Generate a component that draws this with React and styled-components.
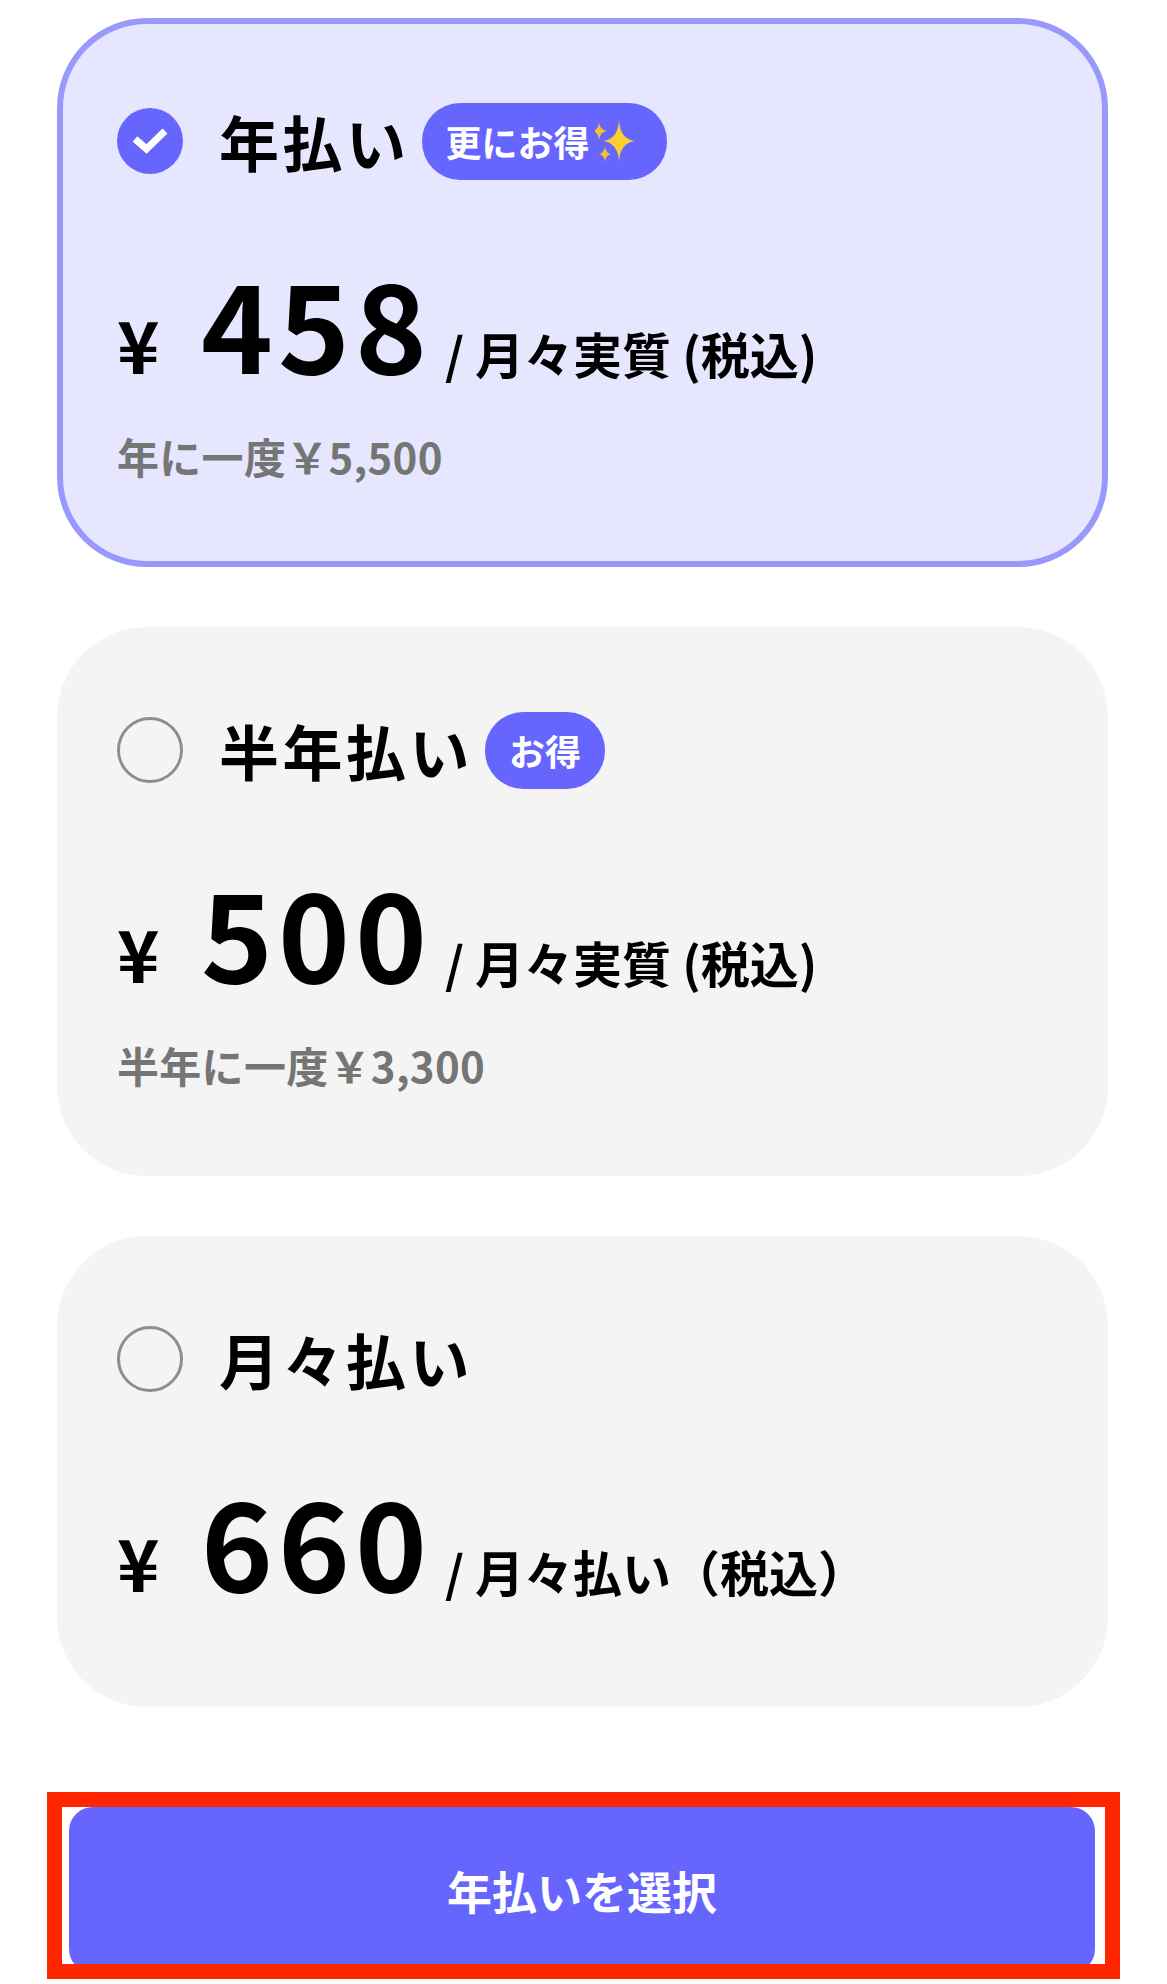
import React from "react";
import styled, { createGlobalStyle } from "styled-components";

const GlobalStyle = createGlobalStyle`
	html, body {
		margin: 0;
		padding: 0;
		background: #fff;
	}

	body {
		font-family: "Noto Sans CJK JP", "Noto Sans", sans-serif;
	}

	* {
		box-sizing: border-box;
	}
`;

const Page = styled.main`
	width: 1167px;
	height: 1984px;
	padding-top: 18px;
	overflow: hidden;
`;

const PlanList = styled.div`
	display: flex;
	flex-direction: column;
	gap: 60px;
	width: 1051px;
	margin-left: 57px;
`;

const Card = styled.section`
	height: ${({ $height }) => $height}px;
	padding: 84px 54px 0;
	border: 6px solid ${({ $selected }) => ($selected ? "#9999fb" : "#f4f4f4")};
	border-radius: 90px;
	background: ${({ $selected }) => ($selected ? "#e6e6fe" : "#f4f4f4")};
`;

const Head = styled.div`
	display: flex;
	align-items: center;
	height: 66px;
`;

const RadioOff = styled.span`
	flex: none;
	width: 66px;
	height: 66px;
	border: 3px solid #8e8e8e;
	border-radius: 50%;
`;

const RadioOn = styled.span`
	flex: none;
	display: flex;
	align-items: center;
	justify-content: center;
	width: 66px;
	height: 66px;
	border-radius: 50%;
	background: #6666ff;
`;

const Title = styled.h2`
	margin: 0 12px 0 36px;
	font-size: 60px;
	font-weight: 700;
	line-height: 66px;
	letter-spacing: 3.5px;
	color: #000;
`;

const Badge = styled.span`
	display: flex;
	align-items: center;
	height: 77px;
	padding: 0 ${({ $sparkle }) => ($sparkle ? 32 : 24)}px 0 24px;
	border-radius: 38px;
	background: #6666ff;
	font-size: 36px;
	font-weight: 700;
	color: #fff;
`;

const PriceRow = styled.div`
	display: flex;
	align-items: baseline;
	height: 124px;
	margin-top: 85px;
	line-height: 124px;
	color: #000;
`;

const Yen = styled.span`
	width: 84px;
	font-size: 72px;
	font-weight: 700;
`;

const Amount = styled.span`
	font-size: 122px;
	font-weight: 700;
	letter-spacing: 5px;
`;

const Unit = styled.span`
	margin-left: 13px;
	font-size: 49px;
	font-weight: 700;
`;

const Note = styled.p`
	margin: 49px 0 0;
	font-size: 42px;
	font-weight: 700;
	line-height: 48px;
	letter-spacing: 0.3px;
	color: #757575;
`;

const Frame = styled.div`
	width: 1073px;
	height: 187px;
	margin: 85px 0 0 47px;
	padding: 0 10px 0 7px;
	border: 15px solid #ff2600;
	background: #fff;
	overflow: hidden;
`;

const SelectButton = styled.button`
	display: block;
	width: 100%;
	height: 166px;
	padding: 0;
	border: 0;
	border-radius: 24px;
	background: #6666ff;
	font-family: inherit;
	font-size: 45px;
	font-weight: 700;
	color: #fff;
`;

const Check = () => (
	<svg width="36" height="26" viewBox="0 0 36 26" aria-hidden="true">
		<path d="M3 11 L14.500 21 L33 3" fill="none" stroke="#fff" strokeWidth="7" />
	</svg>
);

const Sparkles = () => (
	<svg width="40" height="44" viewBox="0 0 40 44" aria-hidden="true" style={{ marginLeft: 5 }}>
		<path d="M24 1 Q24.800 20 40 22 Q24.800 24 24 43 Q23.200 24 8 22 Q23.200 20 24 1Z" fill="#fdd02f" />
		<path d="M4 3 Q4.700 11 12 12 Q4.700 13 4 21 Q3.300 13 -3 12 Q3.300 11 4 3Z" fill="#fbbf2d" />
		<path d="M10 27 Q10.600 34 16 35 Q10.600 36 10 43 Q9.400 36 4 35 Q9.400 34 10 27Z" fill="#fbbf2d" />
	</svg>
);

const plans = [
	{ title: "年払い", badge: "更にお得", sparkle: true, price: "458", unit: "/ 月々実質 (税込)", note: "年に一度￥5,500", height: 549, selected: true },
	{ title: "半年払い", badge: "お得", price: "500", unit: "/ 月々実質 (税込)", note: "半年に一度￥3,300", height: 549 },
	{ title: "月々払い", price: "660", unit: "/ 月々払い（税込）", height: 471 },
];

const App = () => (
	<Page>
		<GlobalStyle />
		<PlanList>
			{plans.map((plan) => (
				<Card key={plan.title} $selected={plan.selected} $height={plan.height}>
					<Head>
						{plan.selected ? <RadioOn><Check /></RadioOn> : <RadioOff />}
						<Title>{plan.title}</Title>
						{plan.badge && (
							<Badge $sparkle={plan.sparkle}>
								{plan.badge}
								{plan.sparkle && <Sparkles />}
							</Badge>
						)}
					</Head>
					<PriceRow>
						<Yen>¥</Yen>
						<Amount>{plan.price}</Amount>
						<Unit>{plan.unit}</Unit>
					</PriceRow>
					{plan.note && <Note>{plan.note}</Note>}
				</Card>
			))}
		</PlanList>
		<Frame>
			<SelectButton>年払いを選択</SelectButton>
		</Frame>
	</Page>
);

export default App;
